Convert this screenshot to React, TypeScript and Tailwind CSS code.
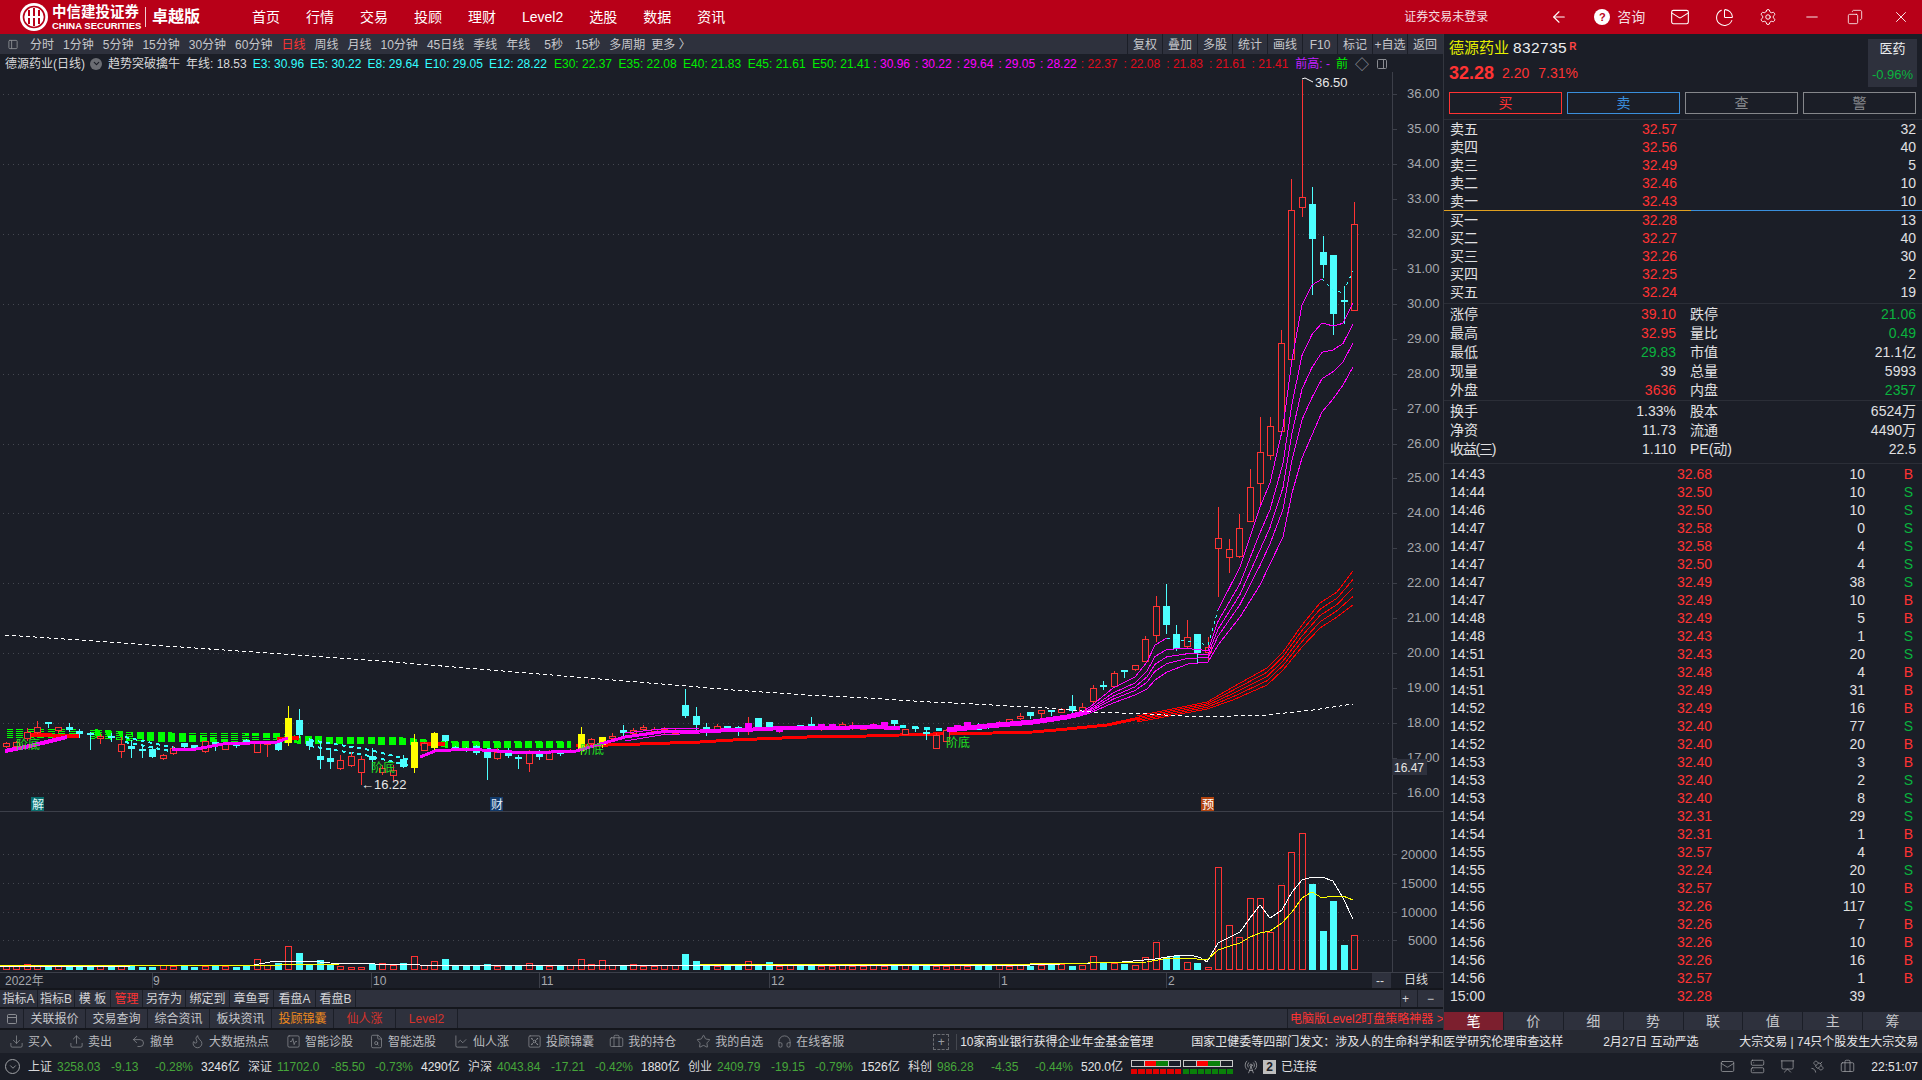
import {
  ArrowLeft,
  Briefcase,
  ChartLine,
  ChevronDown,
  Copy,
  Download,
  FileSearch,
  Flame,
  Headphones,
  Mail,
  Minus,
  PanelLeft,
  PieChart,
  Presentation,
  RadioTower,
  Satellite,
  Server,
  Settings,
  SquareActivity,
  Star,
  Undo2,
  Upload,
  Vault,
  X,
} from 'lucide-react'

type Kind = 'r' | 'c' | 'y' | 'm'
type Candle = [Kind, number, number, number, number]

// 每根K线: [类型, 最高, 实体上沿, 实体下沿, 最低] — 全部是页面 y 坐标
const candles: Candle[] = [
  ['r', 742, 743, 746, 748], ['r', 741, 742, 746, 747], ['r', 728, 732, 738, 741], ['r', 721, 727, 732, 734],
  ['c', 722, 722, 724, 728], ['r', 727, 727, 730, 733], ['c', 723, 727, 730, 732], ['c', 729, 731, 734, 738],
  ['c', 732, 733, 735, 750], ['r', 734, 736, 738, 744], ['c', 733, 736, 738, 742], ['r', 737, 744, 751, 758],
  ['c', 740, 746, 749, 758], ['c', 746, 749, 751, 758], ['c', 747, 749, 757, 758], ['r', 754, 755, 758, 760],
  ['r', 746, 748, 753, 755], ['c', 743, 743, 747, 749], ['c', 745, 745, 749, 750], ['r', 741, 741, 751, 753],
  ['c', 742, 742, 744, 751], ['r', 743, 743, 749, 750], ['c', 743, 744, 746, 748], ['c', 739, 740, 744, 745],
  ['r', 743, 743, 752, 752], ['r', 742, 743, 744, 757], ['c', 741, 741, 750, 751], ['y', 706, 718, 743, 746],
  ['c', 709, 720, 735, 738], ['c', 738, 741, 746, 750], ['c', 741, 756, 760, 769], ['c', 748, 758, 762, 769],
  ['r', 755, 760, 768, 770], ['r', 752, 756, 765, 767], ['r', 756, 759, 772, 785], ['c', 748, 756, 760, 770],
  ['r', 765, 768, 772, 775], ['r', 765, 770, 775, 781], ['c', 755, 759, 767, 768], ['y', 734, 742, 768, 773],
  ['r', 742, 743, 750, 751], ['y', 732, 733, 748, 750], ['c', 735, 735, 741, 742], ['c', 746, 747, 749, 749],
  ['c', 747, 748, 750, 752], ['c', 745, 746, 753, 755], ['c', 750, 752, 758, 780], ['r', 748, 752, 758, 760],
  ['c', 748, 750, 756, 758], ['c', 755, 757, 759, 769], ['r', 750, 753, 763, 772], ['c', 750, 753, 757, 760],
  ['r', 750, 752, 759, 760], ['c', 750, 752, 754, 756], ['r', 749, 750, 752, 752], ['y', 727, 734, 751, 755],
  ['r', 738, 739, 743, 746], ['y', 737, 737, 745, 748], ['r', 733, 736, 738, 740], ['c', 725, 730, 733, 736],
  ['r', 728, 730, 733, 737], ['r', 725, 727, 729, 730], ['r', 727, 729, 731, 733], ['r', 727, 729, 732, 735],
  ['r', 728, 730, 733, 734], ['c', 689, 705, 716, 718], ['c', 707, 716, 725, 730], ['c', 723, 727, 730, 736],
  ['r', 724, 726, 730, 732], ['c', 726, 726, 729, 732], ['c', 726, 727, 732, 736], ['m', 717, 723, 732, 735],
  ['c', 718, 718, 728, 729], ['c', 722, 722, 728, 729], ['m', 727, 727, 732, 733], ['r', 726, 726, 728, 730],
  ['c', 725, 725, 728, 730], ['c', 717, 724, 727, 730], ['m', 724, 724, 730, 731], ['m', 724, 724, 729, 730],
  ['r', 722, 724, 727, 730], ['r', 722, 725, 728, 730], ['r', 727, 727, 729, 730], ['m', 723, 724, 728, 729],
  ['m', 722, 722, 728, 729], ['c', 720, 720, 724, 727], ['r', 729, 729, 734, 735], ['c', 727, 727, 728, 732],
  ['c', 729, 732, 734, 740], ['r', 733, 735, 748, 748], ['r', 729, 730, 741, 742], ['m', 725, 725, 730, 731],
  ['m', 722, 722, 726, 727], ['c', 723, 728, 729, 729], ['c', 723, 725, 727, 729], ['m', 721, 722, 725, 726],
  ['r', 719, 719, 723, 724], ['r', 713, 716, 718, 720], ['c', 712, 712, 716, 719], ['r', 710, 710, 713, 718],
  ['c', 710, 710, 712, 716], ['r', 708, 709, 712, 713], ['c', 695, 706, 711, 713], ['r', 703, 707, 712, 714],
  ['r', 685, 688, 701, 703], ['c', 681, 685, 686, 690], ['r', 671, 673, 686, 687], ['c', 670, 670, 672, 678],
  ['r', 665, 665, 669, 671], ['r', 636, 639, 661, 661], ['r', 596, 606, 635, 642], ['c', 584, 606, 625, 634],
  ['c', 625, 634, 649, 651], ['r', 620, 637, 646, 649], ['c', 634, 634, 653, 664], ['r', 637, 647, 652, 660],
  ['r', 507, 538, 548, 597], ['r', 539, 549, 557, 573], ['r', 514, 528, 556, 558], ['r', 469, 487, 521, 521],
  ['r', 417, 452, 483, 506], ['r', 417, 426, 455, 460], ['r', 330, 343, 431, 431], ['r', 179, 210, 359, 359],
  ['r', 80, 197, 207, 217], ['c', 187, 204, 239, 295], ['c', 236, 252, 265, 278], ['c', 255, 255, 314, 335],
  ['c', 286, 300, 301, 324], ['r', 202, 224, 310, 310],
]

// 成交量柱高度(px)
const volHeights = [
  3, 4, 5, 3, 2, 3, 3, 2, 4, 3, 4, 3, 3, 2, 2, 4, 3, 3, 2, 3, 4, 3, 2, 3, 10, 4, 6, 23, 16, 5, 9, 4, 3, 2, 2, 5, 6, 4, 6,
  13, 4, 8, 10, 4, 3, 3, 5, 3, 4, 3, 6, 4, 3, 3, 4, 10, 5, 9, 4, 4, 5, 3, 3, 4, 4, 15, 8, 3, 3, 4, 3, 8, 3, 7, 3, 4, 5, 4,
  3, 3, 4, 3, 3, 4, 3, 5, 4, 3, 4, 3, 3, 4, 3, 4, 5, 4, 3, 4, 3, 4, 4, 5, 3, 4,
  13, 6, 6, 5, 4, 12, 27, 12, 13, 7, 6, 2, 102, 44, 32, 71, 71, 37, 84, 117, 136, 85, 38, 68, 24, 34,
]

const prices = ['36', '35', '34', '33', '32', '31', '30', '29', '28', '27', '26', '25', '24', '23', '22', '21', '20', '19', '18', '17', '16']

const priceY = (i: number) => 94 + i * 34.95
const candleX = (i: number) => Math.round(6 + i * 10.45) + 0.5
const toPoints = (pts: number[][]) => pts.map((p) => p.join(',')).join(' ')

// E3 / E12 两条线之间按比例插出 E5 E8 E10
const emaFast = [
  [1073, 717, 718], [1090, 707, 713], [1113, 688, 703], [1135, 677, 695], [1147, 662, 689], [1155, 645, 680],
  [1167, 638, 672], [1188, 641, 664], [1208, 645, 662], [1218, 610, 645], [1240, 567, 617], [1260, 507, 585],
  [1270, 483, 564], [1283, 427, 537], [1292, 360, 493], [1302, 305, 458], [1312, 285, 435], [1322, 279, 412],
  [1333, 290, 399], [1343, 293, 385], [1353, 271, 367],
]
const emaSlow = [
  [1137, 716, 722], [1207, 702, 709], [1233, 687, 700], [1267, 668, 685], [1283, 652, 670], [1302, 625, 647],
  [1320, 603, 628], [1337, 592, 617], [1353, 571, 605],
]

const blend = (rows: number[][], f: number) => rows.map(([x, a, b]) => [x, a + (b - a) * f])

const greenLeft = [[6, 729], [80, 730], [95, 730]]
const greenRight = [[95, 730], [134, 733], [281, 734], [300, 737], [400, 738], [446, 742], [571, 742]]
const greenSpread = (x: number) => (x < 285 ? 0.95 : x < 420 ? 0.75 : 0.6)

function PriceChart() {
  return (
    <svg viewBox="0 72 1443 739" className="h-[739px] w-[1443px] flex-none" shapeRendering="crispEdges">
      {[0, 2, 4, 6, 8, 10, 12, 14, 16, 18, 20].map((i) => (
        <line key={i} x1="3" x2="1392" y1={Math.round(priceY(i)) + 0.5} y2={Math.round(priceY(i)) + 0.5} stroke="#444750" strokeDasharray="1 4" />
      ))}
      <line x1="1392.5" x2="1392.5" y1="72" y2="811" stroke="#3c3f49" />
      {prices.map((p, i) => (
        <g key={p}>
          <line x1="1392" x2="1397" y1={Math.round(priceY(i)) + 0.5} y2={Math.round(priceY(i)) + 0.5} stroke="#3c3f49" />
          <text x="1407" y={priceY(i) + 4} fontSize="13" fill="#a6a8ad" shapeRendering="auto">
            {p}.00
          </text>
        </g>
      ))}

      {/* 绿色下降带 */}
      {[0, 2, 4, 6, 8].map((d) => (
        <g key={d}>
          <polyline points={toPoints(greenLeft.map(([x, y]) => [x, y + d]))} fill="none" stroke="#0f0" strokeDasharray="7 3.5" />
          <polyline
            points={toPoints(greenRight.map(([x, y]) => [x, y + d * greenSpread(x)]))}
            fill="none"
            stroke="#0f0"
            strokeWidth="1.5"
            strokeDasharray="7 3.5"
          />
        </g>
      ))}
      <polyline points="125,737 175,748" fill="none" stroke="#3ff" strokeWidth="2" strokeDasharray="4 4" />
      <polyline points="125,742 175,752" fill="none" stroke="#3ff" strokeWidth="2" strokeDasharray="4 4" />
      <polyline points="310,740 370,750 410,760" fill="none" stroke="#3ff" strokeWidth="2" strokeDasharray="4 4" />
      <polyline points="310,746 370,756 410,766" fill="none" stroke="#3ff" strokeWidth="2" strokeDasharray="4 4" />
      <polyline points="487,749 550,757" fill="none" stroke="#3ff" strokeWidth="2" strokeDasharray="5 5" />
      <polyline points="900,726 947,730" fill="none" stroke="#3ff" strokeWidth="3" strokeDasharray="6 6" />

      {/* 红色慢线，左段很粗 */}
      <polyline points="24,735 80,736" fill="none" stroke="#f00" strokeWidth="4" />
      <polyline points="277,739 299,738" fill="none" stroke="#f00" strokeWidth="4" />
      <polyline points="420,744 445,744" fill="none" stroke="#f00" strokeWidth="4" />
      <polyline
        points="576,746 640,744 700,742 733,740 807,737 867,736 933,734 993,733 1033,732 1067,729 1107,725 1140,718"
        fill="none"
        stroke="#f00"
        strokeWidth="3"
      />

      {candles.map(([kind, hi, top, bot, lo], i) => {
        const x = candleX(i)
        const color = kind === 'c' ? '#4dffff' : kind === 'y' ? '#ffff00' : '#ff3333'
        const fill = kind === 'm' ? '#ff00ff' : kind === 'r' ? '#1b1e27' : color
        return (
          <g key={i}>
            <line x1={x} x2={x} y1={hi} y2={lo} stroke={color} />
            {kind === 'r' ? (
              <rect x={x - 3} y={top + 0.5} width="6" height={Math.max(bot - top, 1)} fill={fill} stroke={color} />
            ) : (
              <rect x={x - 3.5} y={top} width="7" height={Math.max(bot - top, 2)} fill={fill} />
            )}
          </g>
        )
      })}

      {/* 品红快线 */}
      <polyline points="5,751 30,746 67,737" fill="none" stroke="#f0f" strokeWidth="4" />
      <polyline points="172,749 196,749 223,744 277,742 288,738" fill="none" stroke="#f0f" strokeWidth="3" />
      <polyline points="420,757 435,751 467,749 527,753 576,751 625,737 661,732 700,731" fill="none" stroke="#f0f" strokeWidth="3" />
      <polyline points="625,733 661,729 700,728" fill="none" stroke="#f0f" />
      <polyline points="625,741 661,735 700,733" fill="none" stroke="#f0f" />
      <polyline points="700,731 743,730 783,728 833,728 867,727 900,728" fill="none" stroke="#f0f" strokeWidth="4" />
      <polyline points="947,730 987,726 1033,722 1067,717 1083,713" fill="none" stroke="#f0f" strokeWidth="5" />
      {[0.33, 0.55, 0.75, 1].map((f) => (
        <polyline key={f} points={toPoints(blend(emaFast, f))} fill="none" stroke="#f0f" />
      ))}
      {/* E3 回落的几段画成青色虚线 */}
      <polyline points={toPoints(blend(emaFast.filter(([x]) => x <= 1167), 0))} fill="none" stroke="#f0f" />
      <polyline points={toPoints(blend(emaFast.filter(([x]) => x >= 1218 && x <= 1322), 0))} fill="none" stroke="#f0f" />
      <polyline points="1322,279 1333,290 1343,293 1353,271" fill="none" stroke="#3ff" strokeDasharray="3 4" />
      <polyline points="1167,638 1188,641 1208,645 1218,610" fill="none" stroke="#3ff" strokeDasharray="3 4" />
      {[0, 0.25, 0.5, 0.75, 1].map((f) => (
        <polyline key={f} points={toPoints(blend(emaSlow, f))} fill="none" stroke="#f00" />
      ))}

      {/* 年线 */}
      <polyline
        points="5,635 123,643 368,660 686,686 733,690 777,693 807,695 867,698 930,702 973,704 1047,708 1093,712 1147,714 1200,717 1267,715 1313,710 1353,704"
        fill="none"
        stroke="#fff"
        strokeDasharray="4 3"
      />

      <g shapeRendering="auto">
        <text x="16" y="749" fontSize="12" fill="#20e020">阶底</text>
        <text x="371" y="772" fontSize="12" fill="#20e020">阶底</text>
        <text x="580" y="754" fontSize="12" fill="#20e020">阶底</text>
        <text x="946" y="747" fontSize="12" fill="#20e020">阶底</text>

        <text x="361" y="789" fontSize="13" fill="#e8e8e8">←16.22</text>
        <polyline points="1302,79 1305,78 1313,82" fill="none" stroke="#fff" />
        <text x="1315" y="87" fontSize="13" fill="#e8e8e8">36.50</text>
      </g>

      <rect x="31" y="797" width="13" height="14" fill="#0a6e6e" />
      <text x="32" y="808.5" fontSize="12" fill="#e0f8f8" shapeRendering="auto">解</text>
      <rect x="490" y="797" width="13" height="14" fill="#123a6a" />
      <text x="491" y="808.5" fontSize="12" fill="#e4eefc" shapeRendering="auto">财</text>
      <rect x="1201" y="797" width="13" height="14" fill="#b4450f" />
      <text x="1202" y="808.5" fontSize="12" fill="#fff" shapeRendering="auto">预</text>

      <rect x="1392" y="759" width="35" height="16" fill="#2e313d" />
      <text x="1394" y="771.5" fontSize="12" fill="#e6e6e6" shapeRendering="auto">16.47</text>
    </svg>
  )
}

const ma5Pts =
  '0,966 130,966 254,965 270,962 285,961 310,961 330,963 420,965 700,965 1000,966 1090,963 1100,962.5 1117,962.5 1155,959 1167,957 1177,955.5 1192,955.5 1200,957.5 1207,962 1218,943 1230,937 1240,932 1250,918 1260,905 1270,918 1282,910 1292,892 1302,880 1312,877 1322,877 1333,881 1343,898 1353,919'
const ma10Pts =
  '0,966 280,965 340,964 700,964 1030,964 1117,962.5 1147,962 1163,959 1187,958 1207,960 1218,950 1230,946 1240,943 1250,937 1260,933 1270,931 1282,923 1292,912 1302,898 1312,892 1322,898 1333,896 1343,896 1353,900'

function VolumeChart() {
  return (
    <svg viewBox="0 812 1443 160" className="h-[160px] w-[1443px] flex-none" shapeRendering="crispEdges">
      {[
        [854, '20000'],
        [883, '15000'],
        [912, '10000'],
        [940, '5000'],
      ].map(([y, label]) => (
        <g key={label}>
          <line x1="3" x2="1392" y1={Number(y) + 0.5} y2={Number(y) + 0.5} stroke="#444750" strokeDasharray="1 4" />
          <line x1="1392" x2="1397" y1={Number(y) + 0.5} y2={Number(y) + 0.5} stroke="#3c3f49" />
          <text x="1437" y={Number(y) + 5} textAnchor="end" fontSize="13" fill="#a6a8ad" shapeRendering="auto">
            {label}
          </text>
        </g>
      ))}
      <line x1="1392.5" x2="1392.5" y1="812" y2="972" stroke="#3c3f49" />
      {candles.map(([kind], i) => {
        const h = volHeights[i] ?? 3
        const x = candleX(i)
        return kind === 'c' ? (
          <rect key={i} x={x - 3.5} y={969 - h} width="7" height={h + 1} fill="#4dffff" />
        ) : (
          <rect key={i} x={x - 3} y={969.5 - h} width="6" height={h} fill="none" stroke="#ff3333" />
        )
      })}
      <polyline points={ma5Pts} fill="none" stroke="#fff" />
      <polyline points={ma10Pts} fill="none" stroke="#ff0" />
    </svg>
  )
}

const dates = [
  [5, '2022年', 0],
  [153, '9', 152],
  [373, '10', 371],
  [541, '11', 539],
  [771, '12', 769],
  [1001, '1', 999],
  [1168, '2', 1166],
] as const

function DateAxis() {
  return (
    <svg viewBox="0 973 1372 15" className="h-[15px] w-[1372px] flex-none" shapeRendering="crispEdges">
      {dates.map(([x, label, tick]) => (
        <g key={label}>
          {tick > 0 && <line x1={tick + 0.5} x2={tick + 0.5} y1="973" y2="988" stroke="#3c3f49" />}
          <text x={x} y="985" fontSize="12" fill="#a6a8ad" shapeRendering="auto">
            {label}
          </text>
        </g>
      ))}
    </svg>
  )
}

const periods: [string, string][] = [
  ['分时', ''],
  ['1分钟', ''],
  ['5分钟', ''],
  ['15分钟', ''],
  ['30分钟', ''],
  ['60分钟', ''],
  ['日线', 'text-[#ff3333]'],
  ['周线', ''],
  ['月线', ''],
  ['10分钟', ''],
  ['45日线', ''],
  ['季线', ''],
  ['年线', ''],
  ['5秒', 'ml-[5px]'],
  ['15秒', 'ml-[3px]'],
  ['多周期', ''],
]
const tools = ['复权', '叠加', '多股', '统计', '画线', 'F10', '标记', '+自选', '返回']
const navItems = ['首页', '行情', '交易', '投顾', '理财', 'Level2', '选股', '数据', '资讯']
const emaFastLegend = ['E3: 30.96', 'E5: 30.22', 'E8: 29.64', 'E10: 29.05', 'E12: 28.22']
const emaSlowLegend = ['E30: 22.37', 'E35: 22.08', 'E40: 21.83', 'E45: 21.61', 'E50: 21.41']

function TopBar() {
  return (
    <div className="flex h-[34px] flex-none items-center bg-[#b80018] text-white">
      <svg viewBox="0 0 28 28" className="ml-5 h-7 w-7 flex-none">
        <circle cx="14" cy="14" r="14" fill="#fff" />
        <circle cx="14" cy="14" r="10.5" fill="none" stroke="#b80018" strokeWidth="1.6" />
        <path d="M9 7v14M14 5v18M19 7v14" stroke="#b80018" strokeWidth="2" />
        <path d="M6 14h16" stroke="#fff" strokeWidth="2" />
      </svg>
      <div className="ml-1 flex w-[90px] flex-none flex-col leading-none">
        <span className="text-[14.5px] font-bold leading-[16px] whitespace-nowrap">中信建投证券</span>
        <span className="text-[9.5px] font-bold leading-[11px] whitespace-nowrap">CHINA SECURITIES</span>
      </div>
      <div className="ml-[3px] h-5 w-px bg-white/80" />
      <span className="ml-[6px] w-[100px] flex-none text-base font-bold">卓越版</span>
      <nav className="flex gap-[26px] text-sm whitespace-nowrap">
        {navItems.map((item) => (
          <span key={item}>{item}</span>
        ))}
      </nav>
      <span className="ml-[679px] w-[146px] flex-none text-xs whitespace-nowrap text-[#f4dfe2]">证券交易未登录</span>
      <ArrowLeft size={18} strokeWidth={1.5} className="flex-none" />
      <div className="ml-[26px] flex h-4 w-4 flex-none items-center justify-center rounded-full bg-white text-[11px] font-bold text-[#b80018]">?</div>
      <span className="ml-[7px] text-sm whitespace-nowrap text-[#f4dfe2]">咨询</span>
      <Mail size={20} strokeWidth={1.3} className="ml-[25px] flex-none" />
      <PieChart size={19} strokeWidth={1.3} className="ml-[25px] flex-none" />
      <Settings size={18} strokeWidth={1.3} className="ml-[25px] flex-none" />
      <Minus size={18} strokeWidth={1.2} className="ml-[26px] flex-none" />
      <Copy size={16} strokeWidth={1.2} className="ml-[26px] flex-none -scale-x-100" />
      <X size={18} strokeWidth={1.2} className="ml-[29px] flex-none" />
    </div>
  )
}

function PeriodBar() {
  return (
    <div className="flex h-5 flex-none items-center bg-[#2e313d] text-xs text-[#c6c7cb]">
      <PanelLeft size={11} className="ml-[7px] w-[12px] flex-none text-[#8a8c92]" />
      <div className="ml-[11px] flex items-center gap-[9px] pt-[1px] whitespace-nowrap">
        {periods.map(([p, cls]) => (
          <span key={p} className={cls}>
            {p}
          </span>
        ))}
        <span className="ml-[-3px]">更多 〉</span>
      </div>
      <div className="mr-[1px] ml-auto flex h-full">
        {tools.map((t) => (
          <span key={t} className="flex h-full w-[35px] items-center justify-center border-l border-[#1b1e27] pt-[1px] whitespace-nowrap">
            {t}
          </span>
        ))}
      </div>
    </div>
  )
}

function LegendLine() {
  return (
    <div className="flex h-[18px] w-[1392px] flex-none items-center overflow-hidden pt-[1px] pr-[4px] text-xs whitespace-nowrap">
      <span className="ml-[5px] text-[#d8d8da]">德源药业(日线)</span>
      <span className="ml-[5px] flex h-3 w-3 flex-none items-center justify-center rounded-full bg-[#6b6d73]">
        <ChevronDown size={9} className="text-[#1b1e27]" strokeWidth={3} />
      </span>
      <span className="ml-[6px] text-[#d8d8da]">趋势突破擒牛</span>
      <span className="ml-[6px] text-[#d8d8da]">年线: 18.53</span>
      <div className="ml-[6px] flex gap-[6px] text-[#33ffff]">
        {emaFastLegend.map((t) => (
          <span key={t}>{t}</span>
        ))}
      </div>
      <div className="ml-[7px] flex gap-[6.5px] text-[#00ee00]">
        {emaSlowLegend.map((t) => (
          <span key={t}>{t}</span>
        ))}
      </div>
      <div className="ml-[3px] flex gap-[5px] text-[#ff00ff]">
        {['30.96', '30.22', '29.64', '29.05', '28.22'].map((t) => (
          <span key={t}>: {t}</span>
        ))}
      </div>
      <div className="ml-[4px] flex gap-[6px] text-[#e00c1c]">
        {['22.37', '22.08', '21.83', '21.61', '21.41'].map((t) => (
          <span key={t}>: {t}</span>
        ))}
      </div>
      <span className="ml-[7px] text-[#c020ff]">前高: -</span>
      <span className="ml-[6px] w-[12px] flex-none overflow-hidden text-[#00ee00]">前</span>
      <span className="ml-auto flex-none text-sm leading-none text-[#9a9ca2]">◇</span>
      <PanelLeft size={12} className="ml-[7px] flex-none -scale-x-100 text-[#8a8c92]" />
    </div>
  )
}

const smallTabs: [string, string][] = [
  ['指标A', 'w-[38px]'],
  ['指标B', 'w-[37px]'],
  ['模 板', 'w-[36px]'],
  ['管理', 'w-[32px] text-[#ff3333]'],
  ['另存为', 'w-[43px]'],
  ['绑定到', 'w-[44px]'],
  ['章鱼哥', 'w-[44px]'],
  ['看盘A', 'w-[42px]'],
  ['看盘B', 'w-[40px]'],
]

const relatedTabs: [string, string][] = [
  ['关联报价', 'text-[#c6c7cb]'],
  ['交易查询', 'text-[#c6c7cb]'],
  ['综合资讯', 'text-[#c6c7cb]'],
  ['板块资讯', 'text-[#c6c7cb]'],
  ['投顾锦囊', 'text-[#f08a1c]'],
  ['仙人涨', 'text-[#d8332c]'],
  ['Level2', 'text-[#d8332c]'],
]

function LeftColumn() {
  return (
    <div className="flex w-[1443px] flex-none flex-col">
      <PeriodBar />
      <LegendLine />
      <PriceChart />
      <div className="h-px w-full flex-none bg-[#3c3f49]" />
      <VolumeChart />
      <div className="h-px w-full flex-none bg-[#3c3f49]" />
      <div className="flex h-[15px] flex-none">
        <DateAxis />
        <span className="flex h-full w-[19px] flex-none items-center bg-[#2e313d] pl-[4px] text-xs text-[#ddd]">--</span>
        <span className="ml-[13px] text-xs leading-[15px] text-[#ddd]">日线</span>
      </div>
      <div className="flex h-[19px] flex-none items-stretch border-t-2 border-[#14161c] bg-[#2e313d] text-xs text-[#d2d3d6]">
        {smallTabs.map(([label, cls]) => (
          <span key={label} className={`flex items-center justify-center border-r border-[#1b1e27] whitespace-nowrap ${cls}`}>
            {label}
          </span>
        ))}
        <span className="ml-auto flex w-[17px] items-center border-l border-[#1b1e27] pl-[1px]">+</span>
        <span className="flex w-[26px] items-center justify-center border-l border-[#1b1e27]">−</span>
      </div>
      <div className="flex h-[23px] flex-none items-stretch border-y-2 border-[#14161c] bg-[#2e313d] text-xs">
        <span className="flex w-[24px] items-center justify-center border-r border-[#1b1e27]">
          <PanelLeft size={12} className="rotate-90 text-[#8a8c92]" />
        </span>
        {relatedTabs.map(([label, cls]) => (
          <span key={label} className={`flex w-[62px] items-center justify-center border-r border-[#1b1e27] whitespace-nowrap ${cls}`}>
            {label}
          </span>
        ))}
        <span className="ml-auto flex w-[156px] items-center border-l border-[#1b1e27] pl-[2px] whitespace-nowrap text-[#ff3333]">
          电脑版Level2盯盘策略神器 &gt;
        </span>
      </div>
    </div>
  )
}

const asks = [
  ['卖五', '32.57', '32'],
  ['卖四', '32.56', '40'],
  ['卖三', '32.49', '5'],
  ['卖二', '32.46', '10'],
  ['卖一', '32.43', '10'],
]
const bids = [
  ['买一', '32.28', '13'],
  ['买二', '32.27', '40'],
  ['买三', '32.26', '30'],
  ['买四', '32.25', '2'],
  ['买五', '32.24', '19'],
]

const RED = 'text-[#ff3333]'
const GREEN = 'text-[#0ab33e]'
const PLAIN = 'text-[#e0e0e2]'

type StatRow = [string, string, string, string, string, string]

const statsA: StatRow[] = [
  ['涨停', '39.10', RED, '跌停', '21.06', GREEN],
  ['最高', '32.95', RED, '量比', '0.49', GREEN],
  ['最低', '29.83', GREEN, '市值', '21.1亿', PLAIN],
  ['现量', '39', PLAIN, '总量', '5993', PLAIN],
  ['外盘', '3636', RED, '内盘', '2357', GREEN],
]
const statsB: StatRow[] = [
  ['换手', '1.33%', PLAIN, '股本', '6524万', PLAIN],
  ['净资', '11.73', PLAIN, '流通', '4490万', PLAIN],
  ['收益(三)', '1.110', PLAIN, 'PE(动)', '22.5', PLAIN],
]

const trades: [string, string, string, string][] = [
  ['14:43', '32.68', '10', 'B'],
  ['14:44', '32.50', '10', 'S'],
  ['14:46', '32.50', '10', 'S'],
  ['14:47', '32.58', '0', 'S'],
  ['14:47', '32.58', '4', 'S'],
  ['14:47', '32.50', '4', 'S'],
  ['14:47', '32.49', '38', 'S'],
  ['14:47', '32.49', '10', 'B'],
  ['14:48', '32.49', '5', 'B'],
  ['14:48', '32.43', '1', 'S'],
  ['14:51', '32.43', '20', 'S'],
  ['14:51', '32.48', '4', 'B'],
  ['14:51', '32.49', '31', 'B'],
  ['14:52', '32.49', '16', 'B'],
  ['14:52', '32.40', '77', 'S'],
  ['14:52', '32.40', '20', 'B'],
  ['14:53', '32.40', '3', 'B'],
  ['14:53', '32.40', '2', 'S'],
  ['14:53', '32.40', '8', 'S'],
  ['14:54', '32.31', '29', 'S'],
  ['14:54', '32.31', '1', 'B'],
  ['14:55', '32.57', '4', 'B'],
  ['14:55', '32.24', '20', 'S'],
  ['14:55', '32.57', '10', 'B'],
  ['14:56', '32.26', '117', 'S'],
  ['14:56', '32.26', '7', 'B'],
  ['14:56', '32.26', '10', 'B'],
  ['14:56', '32.26', '16', 'B'],
  ['14:56', '32.57', '1', 'B'],
  ['15:00', '32.28', '39', ''],
]

const sideTabs = ['笔', '价', '细', '势', '联', '值', '主', '筹']

function BookRows({ rows }: { rows: string[][] }) {
  return (
    <>
      {rows.map(([label, price, vol]) => (
        <div key={label} className="grid h-[18px] flex-none grid-cols-[60px_167px_239px] items-center pl-[6px] text-sm leading-[18px]">
          <span className="text-[#e0e0e2]">{label}</span>
          <span className={`text-right ${RED}`}>{price}</span>
          <span className="text-right text-[#e0e0e2]">{vol}</span>
        </div>
      ))}
    </>
  )
}

function StatRows({ rows }: { rows: StatRow[] }) {
  return (
    <>
      {rows.map(([a, av, ac, b, bv, bc]) => (
        <div key={a} className="grid h-[19px] flex-none grid-cols-[60px_166px_74px_166px] items-center pl-[6px] text-sm leading-[19px]">
          <span className={`whitespace-nowrap text-[#e0e0e2] ${a === '收益(三)' ? 'tracking-[-1.2px]' : ''}`}>{a}</span>
          <span className={`text-right ${ac}`}>{av}</span>
          <span className="pl-[14px] whitespace-nowrap text-[#e0e0e2]">{b}</span>
          <span className={`text-right ${bc}`}>{bv}</span>
        </div>
      ))}
    </>
  )
}

function RightPanel() {
  return (
    <div className="flex h-[996px] w-[479px] flex-none flex-col border-l border-[#33363f]">
      <div className="flex h-[85px] flex-none flex-col">
        <div className="flex items-start">
          <div className="pt-[4px] pl-[5px]">
            <div className="flex h-[20px] items-center whitespace-nowrap">
              <span className="text-[15px] text-[#e6f000]">德源药业</span>
              <span className="ml-[4px] text-[15.5px] tracking-[0.4px] text-[#eceef0]">832735</span>
              <span className="relative -top-[2px] ml-[2px] text-[10px] font-bold text-[#ff4444]">R</span>
            </div>
            <div className="mt-[4px] flex h-[22px] items-center whitespace-nowrap text-[#ff3333]">
              <span className="text-lg font-bold">32.28</span>
              <span className="ml-[8px] text-sm">2.20</span>
              <span className="ml-[9px] text-sm">7.31%</span>
            </div>
          </div>
          <div className="mt-[5px] mr-[5px] ml-auto flex h-[48px] w-[49px] flex-none flex-col items-center justify-between bg-[#2e313d] pb-[3px] text-[13px]">
            <span className="text-[#eceef0]">医药</span>
            <span className={GREEN}>-0.96%</span>
          </div>
        </div>
        <div className="mt-[5px] flex gap-[5px] pl-[5px]">
          <span className="flex h-[22px] w-[113px] items-center justify-center border border-[#ff3333] text-sm text-[#ff3333]">买</span>
          <span className="flex h-[22px] w-[113px] items-center justify-center border border-[#3a8fdc] text-sm text-[#3a8fdc]">卖</span>
          <span className="flex h-[22px] w-[113px] items-center justify-center border border-[#85878b] text-sm text-[#85878b]">查</span>
          <span className="flex h-[22px] w-[113px] items-center justify-center border border-[#85878b] text-sm text-[#85878b]">警</span>
        </div>
      </div>
      <div className="h-px flex-none bg-[#2b2e37]" />
      <BookRows rows={asks} />
      <div className="flex h-px flex-none">
        <div className="w-[247px] bg-[#e0a020]" />
        <div className="flex-1 bg-[#3a8fdc]" />
      </div>
      <BookRows rows={bids} />
      <div className="mt-[2px] h-px flex-none bg-[#2b2e37]" />
      <div className="pt-[1px]">
        <StatRows rows={statsA} />
      </div>
      <div className="h-px flex-none bg-[#2b2e37]" />
      <div className="pt-[1px]">
        <StatRows rows={statsB} />
      </div>
      <div className="mt-[4px] h-px flex-none bg-[#2b2e37]" />
      <div className="mt-[1px] flex-1">
        {trades.map(([time, price, vol, side], i) => (
          <div key={i} className="grid h-[18px] grid-cols-[70px_192px_153px_48px] items-center pl-[6px] text-sm leading-[18px]">
            <span className="text-[#e0e0e2]">{time}</span>
            <span className={`text-right ${RED}`}>{price}</span>
            <span className="text-right text-[#e0e0e2]">{vol}</span>
            <span className={`text-right ${side === 'B' ? RED : GREEN}`}>{side}</span>
          </div>
        ))}
      </div>
      <div className="flex h-[18px] flex-none gap-px text-sm">
        {sideTabs.map((t, i) => (
          <span
            key={t}
            className={`flex flex-1 items-center justify-center ${i === 0 ? 'bg-[#7c1f2e] text-white' : 'bg-[#2e313d] text-[#c6c7cb]'}`}
          >
            {t}
          </span>
        ))}
      </div>
    </div>
  )
}

const quickLinks: [typeof Download, string, string][] = [
  [Download, '买入', 'ml-[9px]'],
  [Upload, '卖出', 'ml-[17px]'],
  [Undo2, '撤单', 'ml-[19px]'],
  [Flame, '大数据热点', 'ml-[16px]'],
  [SquareActivity, '智能诊股', 'ml-[17px]'],
  [FileSearch, '智能选股', 'ml-[16px]'],
  [ChartLine, '仙人涨', 'ml-[18px]'],
  [Vault, '投顾锦囊', 'ml-[18px]'],
  [Briefcase, '我的持仓', 'ml-[15px]'],
  [Star, '我的自选', 'ml-[20px]'],
  [Headphones, '在线客服', 'ml-[14px]'],
]

function QuickBar() {
  return (
    <div className="flex h-[23px] flex-none items-center bg-[#262932] text-xs whitespace-nowrap">
      {quickLinks.map(([Icon, label, cls]) => (
        <span key={label} className={`flex items-center gap-[4px] text-[#b9babe] ${cls}`}>
          <Icon size={15} strokeWidth={1.2} className="text-[#8a8c92]" />
          {label}
        </span>
      ))}
      <span className="ml-[89px] flex h-4 w-4 items-center justify-center border border-dashed border-[#6a6c72] text-[#9a9ca2]">+</span>
      <span className="ml-[7px] h-4 w-px bg-[#44474f]" />
      <div className="ml-[3px] flex text-[#e6e6e8]">
        <span className="w-[231px]">10家商业银行获得企业年金基金管理</span>
        <span className="w-[412px]">国家卫健委等四部门发文：涉及人的生命科学和医学研究伦理审查这样</span>
        <span className="w-[136px]">2月27日 互动严选</span>
        <span>大宗交易 | 74只个股发生大宗交易</span>
      </div>
    </div>
  )
}

const indexes = [
  ['上证', '3258.03', '-9.13', '-0.28%', '3246亿'],
  ['深证', '11702.0', '-85.50', '-0.73%', '4290亿'],
  ['沪深', '4043.84', '-17.21', '-0.42%', '1880亿'],
  ['创业', '2409.79', '-19.15', '-0.79%', '1526亿'],
  ['科创', '986.28', '-4.35', '-0.44%', '520.0亿'],
]

function LevelMeter({ under }: { under: string }) {
  return (
    <div className="flex w-[50px] flex-none flex-col gap-[2px]">
      <div className="flex h-[7px] border border-[#c8c8c8]">
        <span className="flex-1 border-r border-[#c8c8c8]" />
        <span className="flex-1 bg-[#f00]" />
        <span className="flex-1 bg-[#0a800a]" />
        <span className="flex-1 border-l border-[#c8c8c8]" />
      </div>
      <div className="flex h-[5px] gap-px">
        {[0, 1, 2, 3, 4, 5, 6].map((i) => (
          <span key={i} className={`flex-1 ${under}`} />
        ))}
      </div>
    </div>
  )
}

function StatusBar() {
  return (
    <div className="flex h-[27px] flex-none items-center text-xs whitespace-nowrap">
      <span className="ml-[5px] flex h-[15px] w-[15px] flex-none items-center justify-center rounded-full border border-[#a0a2a6]">
        <ChevronDown size={10} className="text-[#a0a2a6]" />
      </span>
      <div className="ml-[8px] flex w-[1103px] flex-none">
        {indexes.map(([name, value, change, pct, amount]) => (
          <div key={name} className="flex">
            <span className="w-[29px] text-[#d8d8da]">{name}</span>
            <span className="w-[54px] text-[#46a63a]">{value}</span>
            <span className="w-[44px] text-[#46a63a]">{change}</span>
            <span className="w-[46px] text-[#46a63a]">{pct}</span>
            <span className="w-[47px] text-[#e6e6e8]">{amount}</span>
          </div>
        ))}
      </div>
      <LevelMeter under="bg-[#e00000]" />
      <span className="w-[2px] flex-none" />
      <LevelMeter under="bg-[#0a800a]" />
      <RadioTower size={14} strokeWidth={1.4} className="ml-[11px] flex-none text-[#a0a2a6]" />
      <span className="ml-[5px] flex h-[14px] w-[13px] flex-none items-center justify-center bg-[#bdbdbd] font-bold text-[#1b1e27]">2</span>
      <span className="ml-[5px] text-[#e0e0e2]">已连接</span>
      <div className="ml-auto flex items-center gap-[15px] text-[#a0a2a6]">
        <Mail size={15} strokeWidth={1.2} />
        <Server size={15} strokeWidth={1.2} />
        <Presentation size={15} strokeWidth={1.2} />
        <Satellite size={15} strokeWidth={1.2} />
        <Briefcase size={15} strokeWidth={1.2} />
      </div>
      <span className="mr-[4px] ml-[16px] text-xs text-[#e6e6e8]">22:51:07</span>
    </div>
  )
}

export default function App() {
  return (
    <div className="flex h-[1080px] w-[1922px] flex-col overflow-hidden bg-[#1b1e27] font-['Liberation_Sans','Noto_Sans_CJK_SC',sans-serif]">
      <TopBar />
      <div className="flex h-[996px] flex-none items-start">
        <LeftColumn />
        <RightPanel />
      </div>
      <QuickBar />
      <StatusBar />
    </div>
  )
}
